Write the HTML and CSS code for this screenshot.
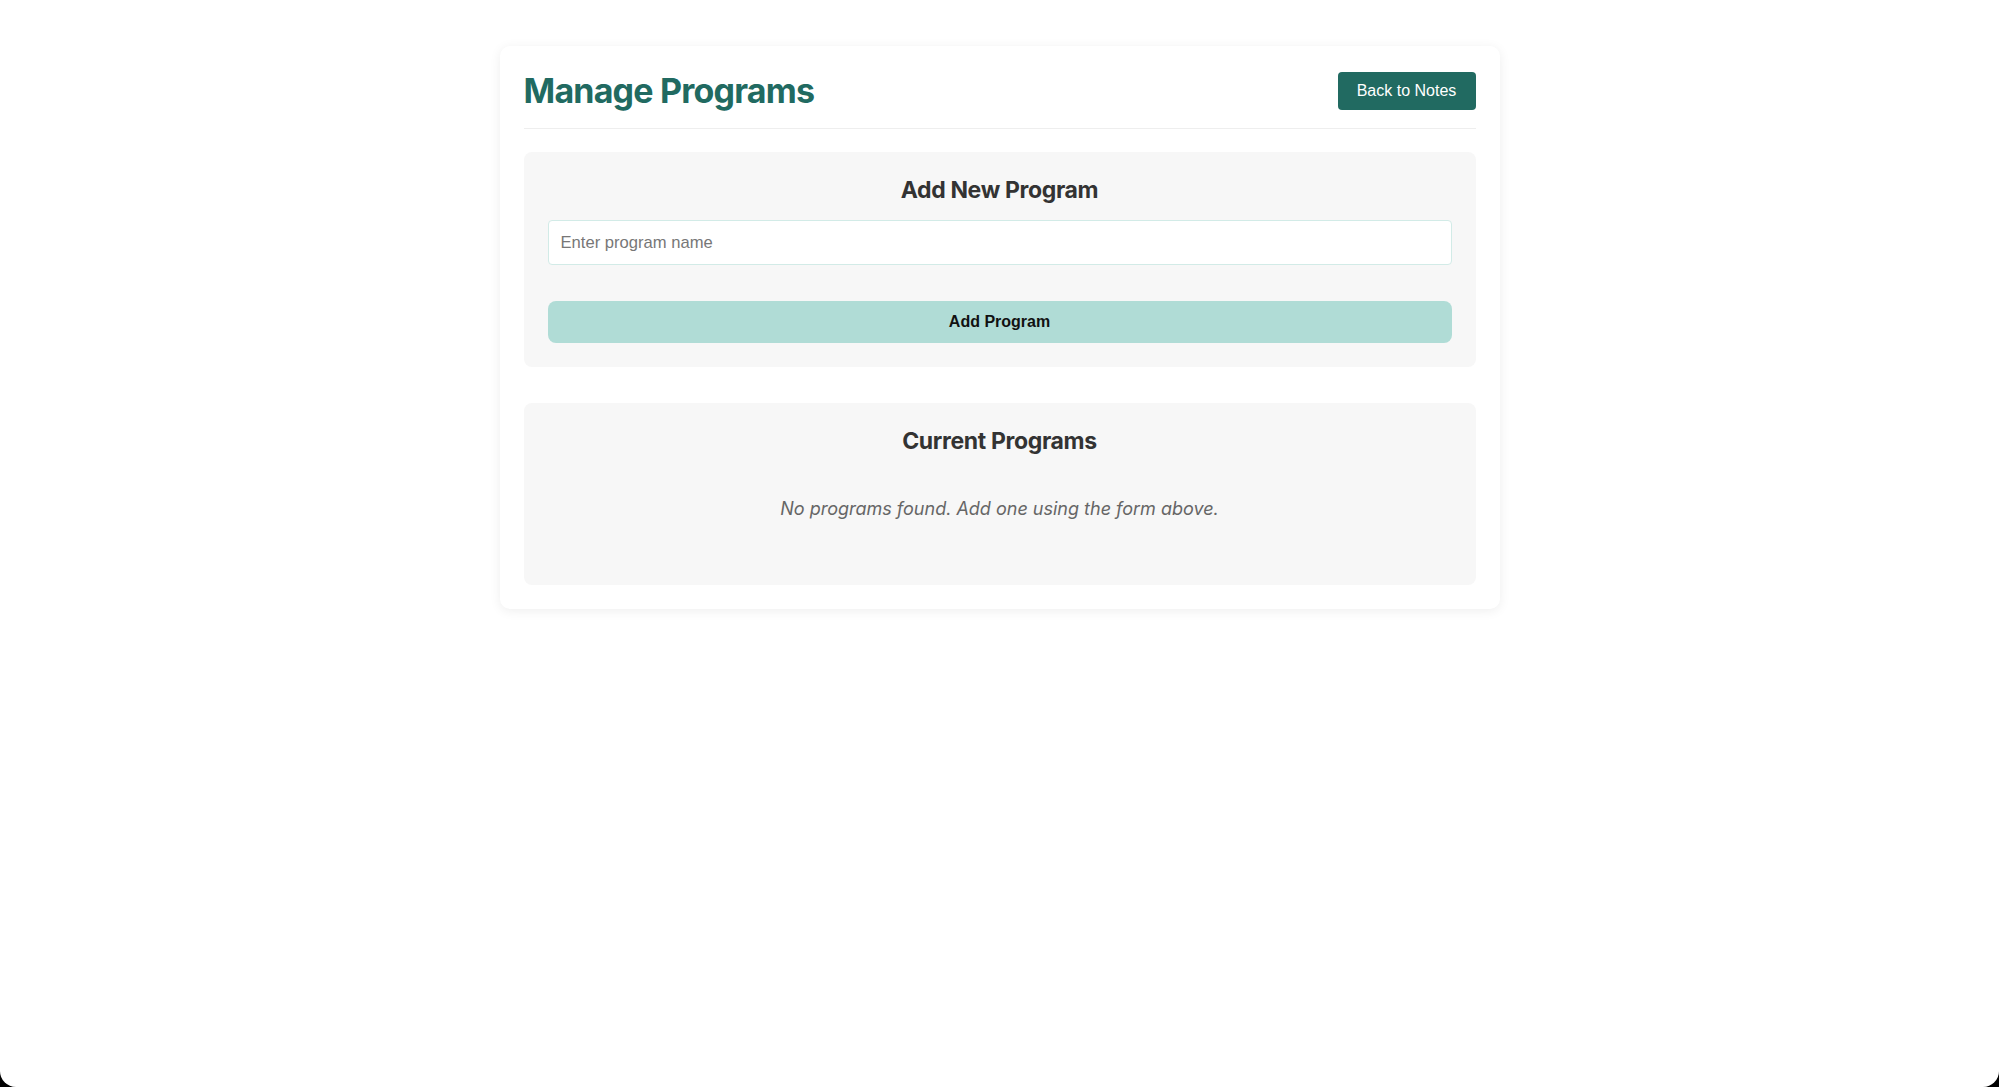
FILE: index.html
```html
<!DOCTYPE html>
<html lang="en">
<head>
<meta charset="utf-8">
<title>Manage Programs</title>
<link rel="stylesheet" href="styles.css">
</head>
<body>
<div class="window">
  <main class="card">
    <header class="header">
      <h1 class="title">Manage Programs</h1>
      <button class="back-btn">Back to Notes</button>
    </header>
    <section class="panel">
      <h2 class="panel-title">Add New Program</h2>
      <input class="name-input" type="text" placeholder="Enter program name">
      <button class="add-btn">Add Program</button>
    </section>
    <section class="panel panel-list">
      <h2 class="panel-title">Current Programs</h2>
      <p class="empty">No programs found. Add one using the form above.</p>
    </section>
  </main>
</div>
</body>
</html>
```

FILE: styles.css
```css
html, body {
  margin: 0;
  padding: 0;
  height: 100%;
  background: #000;
}
.window {
  box-sizing: border-box;
  height: 100vh;
  background: #fff;
  border-radius: 0 0 16px 16px;
  padding-top: 46px;
  font-family: Inter, "Liberation Sans", sans-serif;
}
.card {
  box-sizing: border-box;
  width: 1000px;
  margin: 0 auto;
  background: #fff;
  border-radius: 10px;
  box-shadow: 0 2px 12px rgba(0, 0, 0, 0.07);
  padding: 24px 24px 24px;
}
.header {
  display: flex;
  align-items: center;
  justify-content: space-between;
  padding-bottom: 17px;
  border-bottom: 1px solid #eeeeee;
  margin-bottom: 23px;
}
.title {
  margin: 0;
  font-size: 34px;
  font-weight: 700;
  color: #216a61;
  letter-spacing: -0.8px;
}
.back-btn {
  font-family: "Liberation Sans", Arial, sans-serif;
  font-size: 16px;
  color: #fff;
  background: #216a61;
  border: none;
  border-radius: 4px;
  height: 38px;
  width: 138px;
  padding: 0;
}
.panel {
  background: #f7f7f7;
  border-radius: 8px;
  padding: 24px;
  display: flex;
  flex-direction: column;
  margin-bottom: 36px;
}
.panel-list {
  margin-bottom: 0;
}
.panel-title {
  margin: 0 0 16px;
  font-size: 23px;
  font-weight: 700;
  color: #333;
  text-align: center;
  letter-spacing: -0.35px;
}
.name-input {
  box-sizing: border-box;
  height: 45px;
  border: 1px solid #d2ebe7;
  border-radius: 4px;
  background: #fff;
  padding: 0 12px;
  font-family: "Liberation Sans", Arial, sans-serif;
  font-size: 16.6px;
  margin: 0 0 36px;
}
.name-input::placeholder {
  color: #777;
}
.add-btn {
  height: 42px;
  border: none;
  border-radius: 8px;
  background: #b0dcd6;
  font-family: "Liberation Sans", Arial, sans-serif;
  font-size: 16px;
  font-weight: 700;
  color: #111;
}
.panel-list .panel-title {
  margin-bottom: 0;
}
.empty {
  margin: 0;
  padding: 43px 0 42px;
  text-align: center;
  font-style: italic;
  font-size: 18px;
  color: #666;
}
```
